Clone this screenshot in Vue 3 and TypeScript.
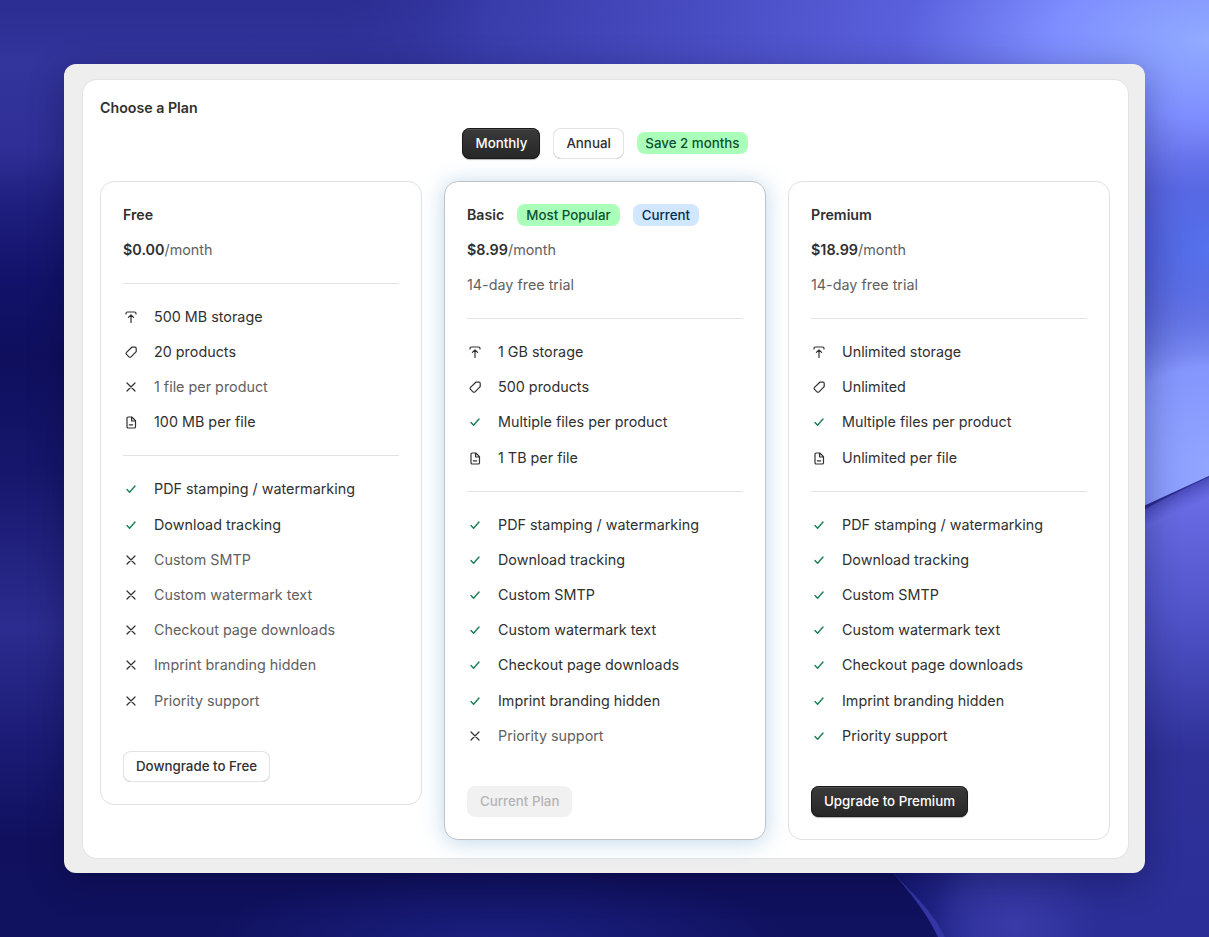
<script setup lang="ts">
type IconName = 'upload' | 'tag' | 'x' | 'file' | 'check'

interface Feature {
  icon: IconName
  text: string
  muted?: boolean
}

interface Plan {
  name: string
  price: string
  trial?: string
  badges: { label: string; kind: 'green' | 'blue' }[]
  limits: Feature[]
  features: Feature[]
  cta: string
  ctaKind: 'secondary' | 'disabled' | 'primary'
  featured?: boolean
}

const featureNames = [
  'PDF stamping / watermarking',
  'Download tracking',
  'Custom SMTP',
  'Custom watermark text',
  'Checkout page downloads',
  'Imprint branding hidden',
  'Priority support'
]

// how many of the feature list are included, the rest get a cross
const buildFeatures = (included: number): Feature[] =>
  featureNames.map((text, i) =>
    i < included ? { icon: 'check', text } : { icon: 'x', text, muted: true }
  )

const plans: Plan[] = [
  {
    name: 'Free',
    price: '$0.00',
    badges: [],
    limits: [
      { icon: 'upload', text: '500 MB storage' },
      { icon: 'tag', text: '20 products' },
      { icon: 'x', text: '1 file per product', muted: true },
      { icon: 'file', text: '100 MB per file' }
    ],
    features: buildFeatures(2),
    cta: 'Downgrade to Free',
    ctaKind: 'secondary'
  },
  {
    name: 'Basic',
    price: '$8.99',
    trial: '14-day free trial',
    badges: [
      { label: 'Most Popular', kind: 'green' },
      { label: 'Current', kind: 'blue' }
    ],
    limits: [
      { icon: 'upload', text: '1 GB storage' },
      { icon: 'tag', text: '500 products' },
      { icon: 'check', text: 'Multiple files per product' },
      { icon: 'file', text: '1 TB per file' }
    ],
    features: buildFeatures(6),
    cta: 'Current Plan',
    ctaKind: 'disabled',
    featured: true
  },
  {
    name: 'Premium',
    price: '$18.99',
    trial: '14-day free trial',
    badges: [],
    limits: [
      { icon: 'upload', text: 'Unlimited storage' },
      { icon: 'tag', text: 'Unlimited' },
      { icon: 'check', text: 'Multiple files per product' },
      { icon: 'file', text: 'Unlimited per file' }
    ],
    features: buildFeatures(7),
    cta: 'Upgrade to Premium',
    ctaKind: 'primary'
  }
]
</script>

<template>
  <div class="page">
    <svg class="backdrop" viewBox="0 0 1209 937" preserveAspectRatio="none" aria-hidden="true">
      <defs>
        <linearGradient id="base" x1="0" y1="0" x2="0" y2="1">
          <stop offset="0" stop-color="#2c2d92" />
          <stop offset="0.064" stop-color="#33349c" />
          <stop offset="0.16" stop-color="#2e2e96" />
          <stop offset="0.22" stop-color="#1e1e7e" />
          <stop offset="0.3" stop-color="#12126a" />
          <stop offset="0.38" stop-color="#0f0f5e" />
          <stop offset="0.5" stop-color="#16166c" />
          <stop offset="0.67" stop-color="#2c2c90" />
          <stop offset="0.8" stop-color="#1a1a74" />
          <stop offset="0.9" stop-color="#10105e" />
          <stop offset="1" stop-color="#10125f" />
        </linearGradient>
        <radialGradient id="sky" gradientUnits="userSpaceOnUse" cx="0" cy="0" r="900" gradientTransform="translate(1209 40) scale(1 0.5)">
          <stop offset="0" stop-color="#92abff" />
          <stop offset="0.17" stop-color="#7e8eff" />
          <stop offset="0.34" stop-color="#5a60dc" />
          <stop offset="0.55" stop-color="#4a4ec4" />
          <stop offset="0.8" stop-color="#3c40b0" stop-opacity="0.8" />
          <stop offset="1" stop-color="#2c2d92" stop-opacity="0" />
        </radialGradient>
        <radialGradient id="dip" gradientUnits="userSpaceOnUse" cx="1209" cy="250" r="110">
          <stop offset="0" stop-color="#5572ee" />
          <stop offset="1" stop-color="#5572ee" stop-opacity="0" />
        </radialGradient>
        <radialGradient id="glow" gradientUnits="userSpaceOnUse" cx="1209" cy="470" r="230">
          <stop offset="0" stop-color="#92a6ff" />
          <stop offset="0.45" stop-color="#8495fc" />
          <stop offset="1" stop-color="#5a70ea" stop-opacity="0" />
        </radialGradient>
        <radialGradient id="floor" gradientUnits="userSpaceOnUse" cx="0" cy="0" r="300" gradientTransform="translate(500 945) scale(1 0.25)">
          <stop offset="0" stop-color="#1c2080" />
          <stop offset="1" stop-color="#1c2080" stop-opacity="0" />
        </radialGradient>
        <radialGradient id="spot" gradientUnits="userSpaceOnUse" cx="1015" cy="925" r="85">
          <stop offset="0" stop-color="#3a3aa8" />
          <stop offset="1" stop-color="#3a3aa8" stop-opacity="0" />
        </radialGradient>
        <linearGradient id="wave" gradientUnits="userSpaceOnUse" x1="0" y1="480" x2="0" y2="937">
          <stop offset="0" stop-color="#6e70ea" />
          <stop offset="0.3" stop-color="#5053c8" />
          <stop offset="0.6" stop-color="#2f3198" />
          <stop offset="1" stop-color="#2a2e96" />
        </linearGradient>
        <linearGradient id="waveShade" gradientUnits="userSpaceOnUse" x1="1177" y1="490" x2="1187" y2="512">
          <stop offset="0" stop-color="#2e2f96" stop-opacity="0.65" />
          <stop offset="1" stop-color="#7474f0" stop-opacity="0.35" />
        </linearGradient>
        <linearGradient id="waveEdge" gradientUnits="userSpaceOnUse" x1="893" y1="0" x2="975" y2="0">
          <stop offset="0" stop-color="#10126a" stop-opacity="0.85" />
          <stop offset="1" stop-color="#10126a" stop-opacity="0" />
        </linearGradient>
      </defs>
      <rect width="1209" height="937" fill="url(#base)" />
      <rect width="1209" height="937" fill="url(#sky)" />
      <rect width="1209" height="937" fill="url(#dip)" />
      <rect width="1209" height="937" fill="url(#floor)" />
      <path d="M1209 477 C1060 545 940 640 893 873 C915 895 935 915 945 937 L1209 937 Z" fill="url(#wave)" />
      <path d="M893 873 H980 V937 H945 C935 915 915 895 893 873Z" fill="url(#waveEdge)" />
      <rect width="1209" height="937" fill="url(#spot)" />
      <path d="M893 873 C915 895 935 915 945 937 L938 937 C928 915 910 892 893 873Z" fill="#3436a6" />
      <path d="M1145 505 L1209 476 V497 L1145 530 Z" fill="url(#waveShade)" />
      <path d="M1100 250 H1209 V476 L1100 526 Z" fill="url(#glow)" />
    </svg>

    <section class="panel">
      <div class="sheet">
        <h1 class="heading">Choose a Plan</h1>

        <div class="billing">
          <button type="button" class="btn primary">Monthly</button>
          <button type="button" class="btn secondary">Annual</button>
          <span class="badge green">Save 2 months</span>
        </div>

        <div class="plans">
          <article v-for="plan in plans" :key="plan.name" class="card" :class="{ featured: plan.featured }">
            <div class="title-row">
              <h2 class="plan-name">{{ plan.name }}</h2>
              <span v-for="b in plan.badges" :key="b.label" class="badge" :class="b.kind">{{ b.label }}</span>
            </div>
            <p class="price"><strong>{{ plan.price }}</strong><span>/month</span></p>
            <p v-if="plan.trial" class="trial">{{ plan.trial }}</p>

            <hr class="rule" />

            <ul class="list">
              <li v-for="f in plan.limits" :key="f.text" :class="{ muted: f.muted }">
                <svg class="icon" :class="f.icon" viewBox="0 0 16 16" fill="none" aria-hidden="true">
                  <template v-if="f.icon === 'upload'">
                    <path d="M3 5V4.4C3 3.6 3.6 3 4.4 3h7.2c.8 0 1.4.6 1.4 1.4V5M8 13.5V6M5.4 8.4 8 5.8l2.6 2.6" />
                  </template>
                  <template v-else-if="f.icon === 'tag'">
                    <path d="M8.8 3.2h3.2c.7 0 1.2.5 1.2 1.2v3.2L8 12.8c-.6.6-1.4.6-2 0L3.5 10.4c-.6-.6-.6-1.4 0-2z" />
                  </template>
                  <template v-else-if="f.icon === 'x'">
                    <path d="M4 4l8 8M12 4l-8 8" />
                  </template>
                  <template v-else-if="f.icon === 'file'">
                    <path d="M4 4.2C4 3.5 4.5 3 5.2 3h3.6L12.5 6.7v6c0 .7-.5 1.3-1.2 1.3H5.2C4.5 14 4 13.4 4 12.7zM8.6 3.2V7h3.7M6.3 10.8h3.4" />
                  </template>
                  <template v-else>
                    <path d="M4 8.6l2.6 2.7L12 5" />
                  </template>
                </svg>
                <span>{{ f.text }}</span>
              </li>
            </ul>

            <hr class="rule" />

            <ul class="list">
              <li v-for="f in plan.features" :key="f.text" :class="{ muted: f.muted }">
                <svg class="icon" :class="f.icon" viewBox="0 0 16 16" fill="none" aria-hidden="true">
                  <path v-if="f.icon === 'x'" d="M4 4l8 8M12 4l-8 8" />
                  <path v-else d="M4 8.6l2.6 2.7L12 5" />
                </svg>
                <span>{{ f.text }}</span>
              </li>
            </ul>

            <div class="cta">
              <button type="button" class="btn" :class="plan.ctaKind" :disabled="plan.ctaKind === 'disabled'">{{ plan.cta }}</button>
            </div>
          </article>
        </div>
      </div>
    </section>
  </div>
</template>

<style>
html, body { margin: 0; background: #10125f; }
</style>

<style scoped>
* { box-sizing: border-box; }
.page {
  position: relative;
  width: 1209px;
  height: 937px;
  padding: 64px;
  overflow: hidden;
  font-family: Inter, "Liberation Sans", sans-serif;
  font-size: 14.35px;
  line-height: 20px;
  color: #303030;
}
.backdrop {
  position: absolute;
  inset: 0;
  width: 100%;
  height: 100%;
}
.panel {
  position: relative;
  width: 1081px;
  height: 809px;
  padding: 15.5px 17px 15px 18.5px;
  background: #eeeeee;
  border-radius: 12px;
  box-shadow: 0 8px 36px rgba(0, 0, 30, 0.32);
}
.sheet {
  height: 100%;
  padding: 18px 0 0 17.5px;
  background: #fff;
  border-radius: 14px;
  box-shadow: 0 0 0 1px #e3e3e3;
}
.heading {
  margin: 0;
  font-size: 14.2px;
  line-height: 20px;
  font-weight: 600;
}
.billing {
  display: flex;
  align-items: center;
  justify-content: center;
  gap: 13px;
  margin-top: 10px;
  padding-right: 17.5px;
}
.btn {
  height: 31px;
  padding: 0 13px;
  font-family: inherit;
  font-size: 13.33px;
  line-height: 20px;
  font-weight: 500;
  border-radius: 8px;
  border: 0;
  cursor: pointer;
}
.btn.primary {
  color: #fff;
  background: linear-gradient(#3b3b3b, #262626);
  box-shadow: 0 0 0 1px #1a1a1a inset, 0 1.5px 0 0 rgba(255, 255, 255, 0.22) inset, 0 1px 1px rgba(0, 0, 0, 0.3);
}
.btn.secondary {
  color: #303030;
  background: #fff;
  box-shadow: 0 0 0 1px #e3e3e3 inset, 0 -1px 0 0 #b5b5b5 inset;
}
.btn.disabled {
  color: #b5b5b5;
  background: #f1f1f1;
  cursor: default;
}
.badge {
  display: inline-flex;
  align-items: center;
  height: 22px;
  padding: 0 9px;
  border-radius: 8px;
  font-size: 13.33px;
  font-weight: 500;
  white-space: nowrap;
}
.badge.green { background: #aaffb9; color: #0c5132; }
.badge.blue { background: #d1e6ff; color: #00304f; }
.billing .badge { padding: 0 8.5px; }
.plans {
  display: grid;
  grid-template-columns: repeat(3, 322px);
  gap: 22px;
  align-items: start;
  margin-top: 22px;
}
.card {
  padding: 23.03px 22px 22px;
  background: #fff;
  border: 1px solid #e1e1e1;
  border-radius: 14px;
}
.card.featured {
  border-color: #bfc3c8;
  box-shadow: 0 2px 22px rgba(100, 160, 205, 0.42);
}
.title-row {
  display: flex;
  align-items: center;
  height: 20px;
  gap: 13px;
}
.plan-name {
  margin: 0;
  font-size: 14.2px;
  line-height: 20px;
  font-weight: 600;
}
.price {
  margin: 15.22px 0 0;
  color: #616161;
}
.price strong {
  color: #303030;
  font-weight: 600;
}
.trial {
  margin: 15.22px 0 0;
  color: #616161;
}
.rule {
  margin: 22.99px 0;
  height: 1px;
  border: 0;
  background: #e3e3e3;
}
.list {
  display: flex;
  flex-direction: column;
  gap: 15.22px;
  margin: 0;
  padding: 0;
  list-style: none;
}
.list li {
  display: flex;
  align-items: center;
  gap: 15px;
}
.list li.muted span { color: #616161; }
.icon {
  flex: none;
  width: 16px;
  height: 16px;
  stroke: #303030;
  stroke-width: 1.2;
  stroke-linecap: round;
  stroke-linejoin: round;
}
.icon.check { stroke: #1b7f55; stroke-width: 1.4; }
.cta { margin-top: 40px; }
.cta .btn { padding-bottom: 1px; }
</style>
